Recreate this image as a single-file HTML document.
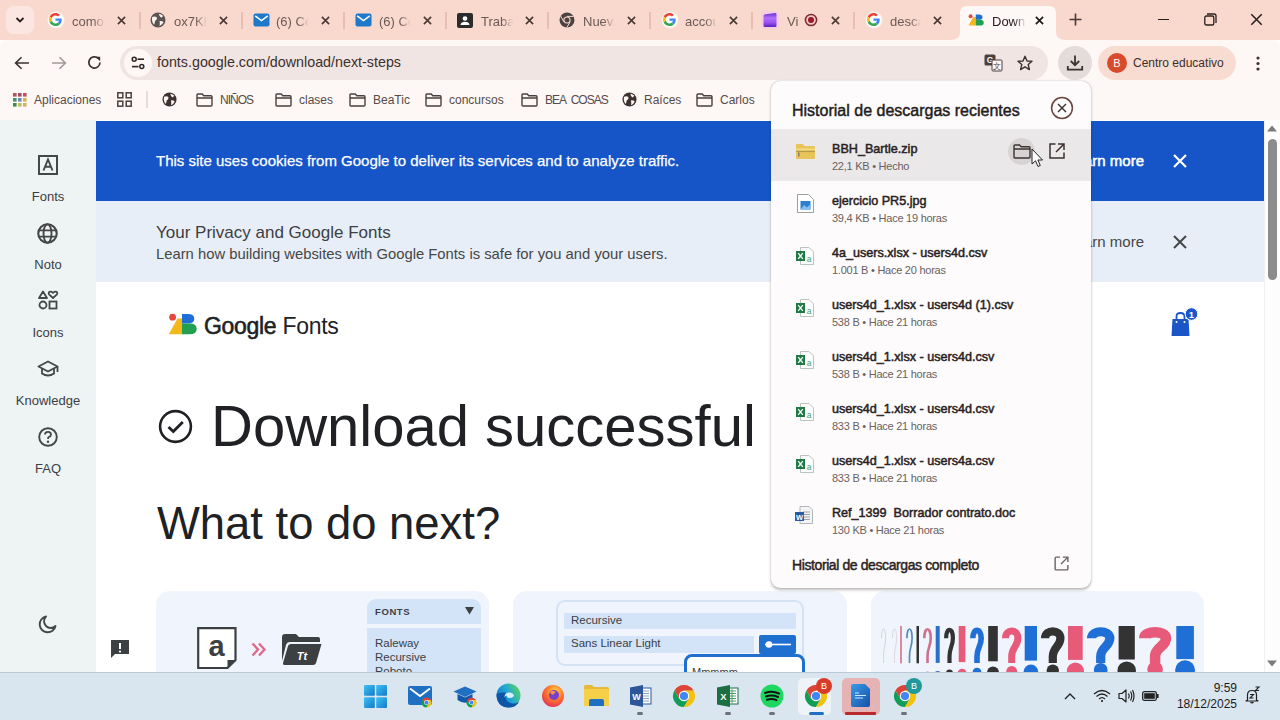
<!DOCTYPE html>
<html><head><meta charset="utf-8"><style>
*{margin:0;padding:0;box-sizing:border-box}
html,body{width:1280px;height:720px;overflow:hidden;font-family:"Liberation Sans",sans-serif;background:#fff}
.a{position:absolute}
svg{position:absolute;overflow:visible}
.tt{position:absolute;font-size:13px;color:#6a5a56;white-space:nowrap;overflow:hidden;-webkit-mask-image:linear-gradient(to right,#000 65%,transparent)}
.bm{position:absolute;font-size:12px;color:#574c4a;white-space:nowrap;top:93px}
.rl{position:absolute;font-size:13px;color:#3c4043;width:96px;text-align:center;left:0}
.fn{position:absolute;font-size:13.5px;font-weight:bold;color:#2a2222;white-space:nowrap;left:61px}
.fs{position:absolute;font-size:11.5px;color:#6b6260;white-space:nowrap;left:61px}
</style></head><body>
<div class="a" style="left:0;top:0;width:1280px;height:40px;background:#f9d8ce"></div>
<div class="a" style="left:6px;top:6px;width:28px;height:28px;border-radius:8px;background:#fbe6e1"></div>
<svg style="left:15px;top:16px" width="10" height="8" viewBox="0 0 10 8"><path d="M1.5 2 L5 5.5 L8.5 2" stroke="#2a1f1d" stroke-width="1.8" fill="none"/></svg>
<div class="a" style="left:46.5px;top:10.5px;width:18px;height:18px;border-radius:9px;background:radial-gradient(circle,#fff 55%,rgba(255,255,255,0) 72%)"></div>
<div class="a" style="left:660.5px;top:10.5px;width:18px;height:18px;border-radius:9px;background:radial-gradient(circle,#fff 55%,rgba(255,255,255,0) 72%)"></div>
<div class="a" style="left:864.5px;top:10.5px;width:18px;height:18px;border-radius:9px;background:radial-gradient(circle,#fff 55%,rgba(255,255,255,0) 72%)"></div>
<svg style="left:49px;top:13px" width="13" height="13" viewBox="0 0 48 48"><path fill="#EA4335" d="M24 9.5c3.54 0 6.71 1.22 9.21 3.6l6.85-6.850C35.9 2.38 30.47 0 24 0 14.62 0 6.51 5.38 2.56 13.22l7.98 6.19C12.43 13.72 17.74 9.5 24 9.5z"/><path fill="#4285F4" d="M46.98 24.55c0-1.57-.15-3.09-.38-4.55H24v9.02h12.94c-.58 2.96-2.26 5.48-4.780 7.18l7.73 6c4.51-4.18 7.09-10.36 7.09-17.65z"/><path fill="#FBBC05" d="M10.53 28.59c-.48-1.45-.76-2.99-.76-4.59s.27-3.14.76-4.59l-7.98-6.19C.92 16.46 0 20.12 0 24c0 3.88.92 7.54 2.56 10.78l7.97-6.19z"/><path fill="#34A853" d="M24 48c6.48 0 11.930-2.13 15.89-5.81l-7.73-6c-2.15 1.45-4.92 2.3-8.16 2.3-6.26 0-11.57-4.22-13.47-9.91l-7.98 6.19C6.51 42.62 14.62 48 24 48z"/></svg>
<div class="tt" style="left:72px;top:13.5px;width:33px">como</div>
<svg style="left:116.5px;top:15.5px" width="9" height="9" viewBox="0 0 10 10"><path d="M1 1 L9 9 M9 1 L1 9" stroke="#4a3a36" stroke-width="1.8"/></svg>
<svg style="left:150px;top:12px" width="16" height="16" viewBox="0 0 16 16"><circle cx="8" cy="8" r="7.5" fill="#5c5452"/><path d="M2.2 5 Q4.5 3.8 6.5 5 Q7.8 6.8 6 8.2 Q4.5 8.8 4.8 10.5 L4 12.8 Q1.2 9.5 2.2 5Z M8.8 1.8 Q11.5 2.2 13.2 4 L11.2 5.8 Q9.5 5 8.8 1.8Z M9.5 9 Q11.8 8.5 13.6 10 Q12.4 12.8 9.6 14 Q10.2 11.2 9.5 9Z" fill="#fdf2ee"/></svg>
<div class="tt" style="left:174px;top:13.5px;width:33px">ox7Kl</div>
<svg style="left:218.5px;top:15.5px" width="9" height="9" viewBox="0 0 10 10"><path d="M1 1 L9 9 M9 1 L1 9" stroke="#4a3a36" stroke-width="1.8"/></svg>
<svg style="left:253px;top:13px" width="17" height="14" viewBox="0 0 17 14"><rect x="0.5" y="0.5" width="16" height="13" rx="2" fill="#1f78c8"/><path d="M2.2 2.8 L8.5 7.6 L14.8 2.8" stroke="#fff" stroke-width="1.5" fill="none"/></svg>
<div class="tt" style="left:276px;top:13.5px;width:33px">(6) Co</div>
<svg style="left:320.5px;top:15.5px" width="9" height="9" viewBox="0 0 10 10"><path d="M1 1 L9 9 M9 1 L1 9" stroke="#4a3a36" stroke-width="1.8"/></svg>
<svg style="left:355px;top:13px" width="17" height="14" viewBox="0 0 17 14"><rect x="0.5" y="0.5" width="16" height="13" rx="2" fill="#1f78c8"/><path d="M2.2 2.8 L8.5 7.6 L14.8 2.8" stroke="#fff" stroke-width="1.5" fill="none"/></svg>
<div class="tt" style="left:379px;top:13.5px;width:32px">(6) Co</div>
<svg style="left:422.5px;top:15.5px" width="9" height="9" viewBox="0 0 10 10"><path d="M1 1 L9 9 M9 1 L1 9" stroke="#4a3a36" stroke-width="1.8"/></svg>
<svg style="left:457px;top:13px" width="16" height="15" viewBox="0 0 16 15"><rect x="0" y="0" width="16" height="15" rx="2" fill="#2b2b2b"/><circle cx="8" cy="5.5" r="2.3" fill="#fff"/><path d="M3.5 12 Q4 8.8 8 8.8 Q12 8.8 12.5 12Z" fill="#fff"/></svg>
<div class="tt" style="left:481px;top:13.5px;width:32px">Trabaj</div>
<svg style="left:524.5px;top:15.5px" width="9" height="9" viewBox="0 0 10 10"><path d="M1 1 L9 9 M9 1 L1 9" stroke="#4a3a36" stroke-width="1.8"/></svg>
<svg style="left:559px;top:12px" width="16" height="16" viewBox="0 0 16 16"><circle cx="8" cy="8" r="7.5" fill="#4a4341"/><circle cx="8" cy="8" r="3.6" fill="#f9d8ce"/><circle cx="8" cy="8" r="2.5" fill="#4a4341"/><path d="M8 4.4 L14.6 4.4" stroke="#f9d8ce" stroke-width="1"/><path d="M4.9 9.8 L1.6 4" stroke="#f9d8ce" stroke-width="1"/><path d="M11.1 9.8 L7.8 15.5" stroke="#f9d8ce" stroke-width="1"/></svg>
<div class="tt" style="left:583px;top:13.5px;width:32px">Nueva</div>
<svg style="left:626.5px;top:15.5px" width="9" height="9" viewBox="0 0 10 10"><path d="M1 1 L9 9 M9 1 L1 9" stroke="#4a3a36" stroke-width="1.8"/></svg>
<svg style="left:663px;top:13px" width="13" height="13" viewBox="0 0 48 48"><path fill="#EA4335" d="M24 9.5c3.54 0 6.71 1.22 9.21 3.6l6.85-6.850C35.9 2.38 30.47 0 24 0 14.62 0 6.51 5.38 2.56 13.22l7.98 6.19C12.43 13.72 17.74 9.5 24 9.5z"/><path fill="#4285F4" d="M46.98 24.55c0-1.57-.15-3.09-.38-4.55H24v9.02h12.94c-.58 2.96-2.26 5.48-4.780 7.18l7.73 6c4.51-4.18 7.09-10.36 7.09-17.65z"/><path fill="#FBBC05" d="M10.53 28.59c-.48-1.45-.76-2.99-.76-4.59s.27-3.14.76-4.59l-7.98-6.19C.92 16.46 0 20.12 0 24c0 3.88.92 7.54 2.56 10.78l7.97-6.19z"/><path fill="#34A853" d="M24 48c6.48 0 11.930-2.13 15.89-5.81l-7.73-6c-2.15 1.45-4.92 2.3-8.16 2.3-6.26 0-11.57-4.22-13.47-9.91l-7.98 6.19C6.51 42.62 14.62 48 24 48z"/></svg>
<div class="tt" style="left:685px;top:13.5px;width:32px">accou</div>
<svg style="left:728.5px;top:15.5px" width="9" height="9" viewBox="0 0 10 10"><path d="M1 1 L9 9 M9 1 L1 9" stroke="#4a3a36" stroke-width="1.8"/></svg>
<svg style="left:762px;top:12px" width="16" height="16" viewBox="0 0 16 16"><defs><linearGradient id="vg" x1="0" y1="0" x2="0" y2="1"><stop offset="0" stop-color="#6a2cc8"/><stop offset=".35" stop-color="#b070f8"/><stop offset=".7" stop-color="#9a50f0"/><stop offset="1" stop-color="#5a20b8"/></linearGradient></defs><rect x="-1" y="-1" width="18" height="18" rx="4" fill="#f3c8f0" opacity=".6"/><path d="M1.5 4 Q1.5 2.5 3.5 2.2 L13.5 1 Q14.5 1 14.5 2.5 L14.5 13.5 Q14.5 15 13 15 L3 15 Q1.5 15 1.5 13.5Z" fill="url(#vg)"/></svg>
<div class="tt" style="left:787px;top:13.5px;width:18px">Vi</div>
<svg style="left:830.5px;top:15.5px" width="9" height="9" viewBox="0 0 10 10"><path d="M1 1 L9 9 M9 1 L1 9" stroke="#4a3a36" stroke-width="1.8"/></svg>
<svg style="left:867px;top:13px" width="13" height="13" viewBox="0 0 48 48"><path fill="#EA4335" d="M24 9.5c3.54 0 6.71 1.22 9.21 3.6l6.85-6.850C35.9 2.38 30.47 0 24 0 14.62 0 6.51 5.38 2.56 13.22l7.98 6.19C12.43 13.72 17.74 9.5 24 9.5z"/><path fill="#4285F4" d="M46.98 24.55c0-1.57-.15-3.09-.38-4.55H24v9.02h12.94c-.58 2.96-2.26 5.48-4.780 7.18l7.73 6c4.51-4.18 7.09-10.36 7.09-17.65z"/><path fill="#FBBC05" d="M10.53 28.59c-.48-1.45-.76-2.99-.76-4.59s.27-3.14.76-4.59l-7.98-6.19C.92 16.46 0 20.12 0 24c0 3.88.92 7.54 2.56 10.78l7.97-6.19z"/><path fill="#34A853" d="M24 48c6.48 0 11.930-2.13 15.89-5.81l-7.73-6c-2.15 1.45-4.92 2.3-8.16 2.3-6.26 0-11.57-4.22-13.47-9.91l-7.98 6.19C6.51 42.62 14.62 48 24 48z"/></svg>
<div class="tt" style="left:890px;top:13.5px;width:31px">desca</div>
<svg style="left:932.5px;top:15.5px" width="9" height="9" viewBox="0 0 10 10"><path d="M1 1 L9 9 M9 1 L1 9" stroke="#4a3a36" stroke-width="1.8"/></svg>
<div class="a" style="left:139px;top:12px;width:1.5px;height:17px;background:#e9bdb2"></div>
<div class="a" style="left:241px;top:12px;width:1.5px;height:17px;background:#e9bdb2"></div>
<div class="a" style="left:343px;top:12px;width:1.5px;height:17px;background:#e9bdb2"></div>
<div class="a" style="left:445px;top:12px;width:1.5px;height:17px;background:#e9bdb2"></div>
<div class="a" style="left:547px;top:12px;width:1.5px;height:17px;background:#e9bdb2"></div>
<div class="a" style="left:649px;top:12px;width:1.5px;height:17px;background:#e9bdb2"></div>
<div class="a" style="left:751px;top:12px;width:1.5px;height:17px;background:#e9bdb2"></div>
<div class="a" style="left:853px;top:12px;width:1.5px;height:17px;background:#e9bdb2"></div>
<svg style="left:804px;top:13px" width="14" height="14" viewBox="0 0 14 14"><circle cx="7" cy="7" r="5.6" fill="#f7c4c8" stroke="#7e2a30" stroke-width="1.5"/><circle cx="7" cy="7" r="3" fill="#9a1a2a"/></svg>
<svg style="left:950px;top:5px" width="116" height="36" viewBox="0 0 116 36"><path d="M0 35 Q10 35 10 27 L10 8 Q10 1 17 1 L99 1 Q106 1 106 8 L106 27 Q106 35 116 35 L116 36 L0 36Z" fill="#fdf7f5"/></svg>
<svg style="left:968px;top:14px" width="16" height="12" viewBox="0 0 29 22"><circle cx="4.6" cy="4.2" r="3.6" fill="#e5473a"/><path d="M0.8 21.3 L14 21.3 L14 5.5 L9.5 5.5Z" fill="#f4b81c"/><path d="M14 1 H20 Q26.3 1 26.3 5.8 Q26.3 10.6 20 10.6 H14Z" fill="#1f6ed6"/><path d="M14 10.6 H21.5 Q28.7 10.6 28.7 16 Q28.7 21.3 21.5 21.3 H14Z" fill="#22a050"/></svg>
<div class="tt" style="left:992px;top:13.5px;width:34px;color:#2a2220">Down</div>
<svg style="left:1034.5px;top:15.5px" width="9" height="9" viewBox="0 0 10 10"><path d="M1 1 L9 9 M9 1 L1 9" stroke="#1f1a19" stroke-width="1.9"/></svg>
<svg style="left:1069px;top:13px" width="13" height="13" viewBox="0 0 13 13"><path d="M6.5 0.5 V12.5 M0.5 6.5 H12.5" stroke="#4a3a36" stroke-width="1.6"/></svg>
<div class="a" style="left:1158px;top:19px;width:11px;height:1.3px;background:#2a1f1d"></div>
<svg style="left:1204px;top:13px" width="13" height="13" viewBox="0 0 13 13"><rect x="0.8" y="3" width="9" height="9" rx="1.6" fill="none" stroke="#2a1f1d" stroke-width="1.3"/><path d="M3 1 H10 Q12 1 12 3 V10" fill="none" stroke="#2a1f1d" stroke-width="1.3"/></svg>
<svg style="left:1249.5px;top:13px" width="13" height="13" viewBox="0 0 10 10"><path d="M1 1 L9 9 M9 1 L1 9" stroke="#2a1f1d" stroke-width="1.2"/></svg>
<div class="a" style="left:0;top:40px;width:1280px;height:80px;background:#fdf7f5;border-radius:7px 7px 0 0"></div>
<svg style="left:14px;top:56px" width="16" height="14" viewBox="0 0 16 14"><path d="M15 7 H2 M7.5 1.2 L1.6 7 L7.5 12.8" stroke="#3d3230" stroke-width="1.6" fill="none"/></svg>
<svg style="left:51px;top:56px" width="16" height="14" viewBox="0 0 16 14"><path d="M1 7 H14 M8.5 1.2 L14.4 7 L8.5 12.8" stroke="#a39a98" stroke-width="1.6" fill="none"/></svg>
<svg style="left:87px;top:55px" width="15" height="15" viewBox="0 0 15 15"><path d="M13 7.5 A5.6 5.6 0 1 1 11.2 3.3" stroke="#3d3230" stroke-width="1.7" fill="none"/><path d="M8.5 1.8 L13.2 1.8 L13.2 6.3Z" fill="#3d3230"/></svg>
<div class="a" style="left:120px;top:46px;width:928px;height:34px;border-radius:17px;background:#f1e5e3"></div>
<div class="a" style="left:124px;top:49px;width:28px;height:28px;border-radius:14px;background:#fdf7f5"></div>
<svg style="left:131px;top:56px" width="14" height="14" viewBox="0 0 14 14"><circle cx="3.2" cy="3.2" r="2" fill="none" stroke="#2f2624" stroke-width="1.5"/><path d="M6.5 3.2 H13" stroke="#2f2624" stroke-width="1.6"/><circle cx="10.8" cy="10.6" r="2" fill="none" stroke="#2f2624" stroke-width="1.5"/><path d="M1 10.6 H7.5" stroke="#2f2624" stroke-width="1.6"/></svg>
<div class="a" style="left:157px;top:54px;font-size:14.3px;color:#3b2f2c;white-space:nowrap">fonts.google.com/download/next-steps</div>
<svg style="left:984px;top:54px" width="19" height="18" viewBox="0 0 19 18"><rect x="0.5" y="0.5" width="11" height="11" rx="1.5" fill="#4a403e"/><text x="6" y="9.3" font-size="8.5" font-weight="bold" fill="#fdf7f5" text-anchor="middle" font-family="Liberation Sans">G</text><path d="M8 6 H17 Q18 6 18 7 V16 Q18 17 17 17 H9 Q8 17 8 16Z" fill="#fdf7f5" stroke="#4a403e" stroke-width="1"/><text x="13" y="15" font-size="7.5" fill="#4a403e" text-anchor="middle" font-family="Liberation Sans">文</text></svg>
<svg style="left:1017px;top:55px" width="16" height="16" viewBox="0 0 16 16"><path d="M8 1.2 L10 6 L15 6.3 L11.2 9.5 L12.4 14.6 L8 11.8 L3.6 14.6 L4.8 9.5 L1 6.3 L6 6 Z" fill="none" stroke="#3d3230" stroke-width="1.4" stroke-linejoin="round"/></svg>
<div class="a" style="left:1058px;top:46px;width:34px;height:34px;border-radius:17px;background:#e3dcda"></div>
<svg style="left:1066px;top:54px" width="18" height="18" viewBox="0 0 18 18"><path d="M9 1.5 V11 M4.8 7 L9 11.2 L13.2 7" stroke="#3d3230" stroke-width="1.8" fill="none"/><path d="M1.8 12 V15.6 H16.2 V12" stroke="#3d3230" stroke-width="1.8" fill="none"/></svg>
<div class="a" style="left:1098px;top:46px;width:138px;height:34px;border-radius:17px;background:#f8dcd2"></div>
<div class="a" style="left:1107px;top:53px;width:20px;height:20px;border-radius:10px;background:#d84a2c;color:#fff;font-size:11px;text-align:center;line-height:20px">B</div>
<div class="a" style="left:1133px;top:56px;font-size:12px;color:#3b2f2c;white-space:nowrap">Centro educativo</div>
<svg style="left:1256px;top:56px" width="4" height="15" viewBox="0 0 4 15"><circle cx="2" cy="2" r="1.6" fill="#3d3230"/><circle cx="2" cy="7.5" r="1.6" fill="#3d3230"/><circle cx="2" cy="13" r="1.6" fill="#3d3230"/></svg>
<svg style="left:13px;top:93px" width="15" height="15" viewBox="0 0 15 15"><rect x="0" y="0" width="3.6" height="3.6" fill="#b7505b"/><rect x="5" y="0" width="3.6" height="3.6" fill="#9c4f6b"/><rect x="10" y="0" width="3.6" height="3.6" fill="#c0505a"/><rect x="0" y="5" width="3.6" height="3.6" fill="#4f8f5e"/><rect x="5" y="5" width="3.6" height="3.6" fill="#6b86b8"/><rect x="10" y="5" width="3.6" height="3.6" fill="#d7b24a"/><rect x="0" y="10" width="3.6" height="3.6" fill="#3f8a53"/><rect x="5" y="10" width="3.6" height="3.6" fill="#c7b860"/><rect x="10" y="10" width="3.6" height="3.6" fill="#c9b85a"/></svg>
<div class="bm" style="left:34px">Aplicaciones</div>
<svg style="left:117px;top:92px" width="15" height="15" viewBox="0 0 15 15"><rect x="0.8" y="0.8" width="5" height="5" fill="none" stroke="#4a403e" stroke-width="1.5"/><rect x="9.2" y="0.8" width="5" height="5" fill="none" stroke="#4a403e" stroke-width="1.5"/><rect x="0.8" y="9.2" width="5" height="5" fill="none" stroke="#4a403e" stroke-width="1.5"/><rect x="9.2" y="9.2" width="5" height="5" fill="none" stroke="#4a403e" stroke-width="1.5"/></svg>
<div class="a" style="left:146px;top:91px;width:1.5px;height:17px;background:#e6dcda"></div>
<svg style="left:162px;top:92px" width="15" height="15" viewBox="0 0 16 16"><circle cx="8" cy="8" r="7.5" fill="#3d3230"/><path d="M2.2 5 Q4.5 3.8 6.5 5 Q7.8 6.8 6 8.2 Q4.5 8.8 4.8 10.5 L4 12.8 Q1.2 9.5 2.2 5Z M8.8 1.8 Q11.5 2.2 13.2 4 L11.2 5.8 Q9.5 5 8.8 1.8Z M9.5 9 Q11.8 8.5 13.6 10 Q12.4 12.8 9.6 14 Q10.2 11.2 9.5 9Z" fill="#fdf7f5"/></svg>
<svg style="left:196px;top:93px" width="17" height="14" viewBox="0 0 17 14"><path d="M1 2 Q1 1 2 1 L6.2 1 L7.8 2.8 L15 2.8 Q16 2.8 16 3.8 L16 12 Q16 13 15 13 L2 13 Q1 13 1 12Z M1 5 H16" fill="none" stroke="#4a403e" stroke-width="1.4"/></svg>
<div class="bm" style="left:220px;letter-spacing:-1px;word-spacing:3px">NIÑOS</div>
<svg style="left:275px;top:93px" width="17" height="14" viewBox="0 0 17 14"><path d="M1 2 Q1 1 2 1 L6.2 1 L7.8 2.8 L15 2.8 Q16 2.8 16 3.8 L16 12 Q16 13 15 13 L2 13 Q1 13 1 12Z M1 5 H16" fill="none" stroke="#4a403e" stroke-width="1.4"/></svg>
<div class="bm" style="left:299px">clases</div>
<svg style="left:349px;top:93px" width="17" height="14" viewBox="0 0 17 14"><path d="M1 2 Q1 1 2 1 L6.2 1 L7.8 2.8 L15 2.8 Q16 2.8 16 3.8 L16 12 Q16 13 15 13 L2 13 Q1 13 1 12Z M1 5 H16" fill="none" stroke="#4a403e" stroke-width="1.4"/></svg>
<div class="bm" style="left:373px">BeaTic</div>
<svg style="left:425px;top:93px" width="17" height="14" viewBox="0 0 17 14"><path d="M1 2 Q1 1 2 1 L6.2 1 L7.8 2.8 L15 2.8 Q16 2.8 16 3.8 L16 12 Q16 13 15 13 L2 13 Q1 13 1 12Z M1 5 H16" fill="none" stroke="#4a403e" stroke-width="1.4"/></svg>
<div class="bm" style="left:449px">concursos</div>
<svg style="left:521px;top:93px" width="17" height="14" viewBox="0 0 17 14"><path d="M1 2 Q1 1 2 1 L6.2 1 L7.8 2.8 L15 2.8 Q16 2.8 16 3.8 L16 12 Q16 13 15 13 L2 13 Q1 13 1 12Z M1 5 H16" fill="none" stroke="#4a403e" stroke-width="1.4"/></svg>
<div class="bm" style="left:545px;letter-spacing:-1px;word-spacing:3px">BEA COSAS</div>
<svg style="left:696px;top:93px" width="17" height="14" viewBox="0 0 17 14"><path d="M1 2 Q1 1 2 1 L6.2 1 L7.8 2.8 L15 2.8 Q16 2.8 16 3.8 L16 12 Q16 13 15 13 L2 13 Q1 13 1 12Z M1 5 H16" fill="none" stroke="#4a403e" stroke-width="1.4"/></svg>
<div class="bm" style="left:720px">Carlos</div>
<svg style="left:622px;top:92px" width="15" height="15" viewBox="0 0 16 16"><circle cx="8" cy="8" r="7.5" fill="#3d3230"/><path d="M2.2 5 Q4.5 3.8 6.5 5 Q7.8 6.8 6 8.2 Q4.5 8.8 4.8 10.5 L4 12.8 Q1.2 9.5 2.2 5Z M8.8 1.8 Q11.5 2.2 13.2 4 L11.2 5.8 Q9.5 5 8.8 1.8Z M9.5 9 Q11.8 8.5 13.6 10 Q12.4 12.8 9.6 14 Q10.2 11.2 9.5 9Z" fill="#fdf7f5"/></svg>
<div class="bm" style="left:644px">Raíces</div>
<div class="a" style="left:0;top:120px;width:1280px;height:552px;background:#fff"></div>
<div class="a" style="left:0;top:120px;width:96px;height:552px;background:#eef3f4"></div>
<svg style="left:38px;top:155px" width="20" height="20" viewBox="0 0 20 20"><rect x="1" y="1" width="18" height="18" fill="none" stroke="#444746" stroke-width="2"/><path d="M5.5 15.5 L10 4.5 L14.5 15.5 M7 11.8 H13" stroke="#444746" stroke-width="1.9" fill="none"/></svg>
<div class="rl" style="top:189px">Fonts</div>
<svg style="left:37px;top:223px" width="21" height="21" viewBox="0 0 20 20"><circle cx="10" cy="10" r="8.8" fill="none" stroke="#444746" stroke-width="2"/><ellipse cx="10" cy="10" rx="3.8" ry="8.8" fill="none" stroke="#444746" stroke-width="1.8"/><path d="M1.5 7 H18.5 M1.5 13 H18.5" stroke="#444746" stroke-width="1.8"/></svg>
<div class="rl" style="top:257px">Noto</div>
<svg style="left:38px;top:290px" width="20" height="20" viewBox="0 0 20 20"><path d="M5 1.5 L9 8 L1 8Z" fill="none" stroke="#444746" stroke-width="1.8" stroke-linejoin="round"/><path d="M15 8 L11.3 4.6 Q10 3 11.5 1.8 Q13 1 15 2.8 Q17 1 18.5 1.8 Q20 3 18.7 4.6Z" fill="none" stroke="#444746" stroke-width="1.8" stroke-linejoin="round"/><circle cx="5" cy="15" r="3.5" fill="none" stroke="#444746" stroke-width="1.8"/><rect x="11.5" y="11.5" width="7" height="7" fill="none" stroke="#444746" stroke-width="1.8"/></svg>
<div class="rl" style="top:325px">Icons</div>
<svg style="left:37px;top:360px" width="22" height="18" viewBox="0 0 22 18"><path d="M11 1.5 L20.5 6.5 L11 11.5 L1.5 6.5Z" fill="none" stroke="#444746" stroke-width="1.8" stroke-linejoin="round"/><path d="M5 8.5 V13.5 Q11 17.5 17 13.5 V8.5" fill="none" stroke="#444746" stroke-width="1.8"/><path d="M20.5 6.5 V12" stroke="#444746" stroke-width="1.8"/></svg>
<div class="rl" style="top:393px">Knowledge</div>
<svg style="left:38px;top:427px" width="20" height="20" viewBox="0 0 20 20"><circle cx="10" cy="10" r="8.8" fill="none" stroke="#444746" stroke-width="1.9"/><path d="M7 7.5 Q7 4.8 10 4.8 Q13 4.8 13 7.5 Q13 9.2 10.8 10 Q10 10.5 10 12" fill="none" stroke="#444746" stroke-width="1.8"/><circle cx="10" cy="14.8" r="1.2" fill="#444746"/></svg>
<div class="rl" style="top:461px">FAQ</div>
<svg style="left:38px;top:615px" width="19" height="19" viewBox="0 0 19 19"><path d="M8 1.5 A8 8 0 1 0 17.5 11 A6.5 6.5 0 0 1 8 1.5Z" fill="none" stroke="#444746" stroke-width="1.9" stroke-linejoin="round"/></svg>
<svg style="left:110px;top:639px" width="20" height="20" viewBox="0 0 20 20"><path d="M1 1 H19 V15 H5 L1 19Z" fill="#3c4043"/><path d="M10 4 V10" stroke="#fff" stroke-width="2"/><circle cx="10" cy="12.6" r="1.1" fill="#fff"/></svg>
<div class="a" style="left:96px;top:121px;width:1168px;height:80px;background:#1555c7"></div>
<div class="a" style="left:96px;top:201px;width:1168px;height:81px;background:#e8eef7"></div>
<div class="a" style="left:156px;top:152px;font-size:15px;color:#fff;-webkit-text-stroke:0.25px #fff;white-space:nowrap">This site uses cookies from Google to deliver its services and to analyze traffic.</div>
<div class="a" style="left:944px;width:200px;text-align:right;top:152px;font-size:15px;-webkit-text-stroke:0.5px #fff;color:#fff;white-space:nowrap">Learn more</div>
<svg style="left:1173px;top:154px" width="14" height="14" viewBox="0 0 14 14"><path d="M1 1 L13 13 M13 1 L1 13" stroke="#fff" stroke-width="2.2"/></svg>
<div class="a" style="left:156px;top:223px;font-size:17px;color:#3c4043;white-space:nowrap">Your Privacy and Google Fonts</div>
<div class="a" style="left:156px;top:246px;font-size:14.8px;color:#444746;white-space:nowrap">Learn how building websites with Google Fonts is safe for you and your users.</div>
<div class="a" style="left:944px;width:200px;text-align:right;top:233px;font-size:15px;color:#444746;white-space:nowrap">Learn more</div>
<svg style="left:1173px;top:235px" width="14" height="14" viewBox="0 0 14 14"><path d="M1 1 L13 13 M13 1 L1 13" stroke="#444746" stroke-width="2"/></svg>
<svg style="left:168px;top:313px" width="29" height="22" viewBox="0 0 29 22"><circle cx="4.6" cy="4.2" r="3.4" fill="#e5473a"/><path d="M0.8 21.3 L14 21.3 L14 5.5 L9.5 5.5Z" fill="#f4b81c"/><path d="M14 1 H20 Q26.3 1 26.3 5.8 Q26.3 10.6 20 10.6 H14Z" fill="#1f6ed6"/><path d="M14 10.6 H21.5 Q28.7 10.6 28.7 16 Q28.7 21.3 21.5 21.3 H14Z" fill="#22a050"/></svg>
<div class="a" style="left:204px;top:312.5px;font-size:23px;color:#202124;white-space:nowrap;letter-spacing:-0.3px"><span style="-webkit-text-stroke:0.55px #202124">Google</span> Fonts</div>
<svg style="left:1171px;top:308px" width="28" height="30" viewBox="0 0 28 30"><path d="M1.5 11 H17.5 L18.5 28 H0.5Z" fill="#1a56c8"/><path d="M5.5 12 V8.5 Q5.5 5 9.5 5 Q13.5 5 13.5 8.5 V12" fill="none" stroke="#1a56c8" stroke-width="1.8"/><circle cx="5.5" cy="14" r="1" fill="#fff"/><circle cx="13.5" cy="14" r="1" fill="#fff"/><circle cx="20.5" cy="6" r="6.3" fill="#1a56c8" stroke="#fff" stroke-width="1"/><text x="20.5" y="9.6" font-size="9.5" font-weight="bold" fill="#fff" text-anchor="middle" font-family="Liberation Sans">1</text></svg>
<svg style="left:158px;top:409px" width="36" height="36" viewBox="0 0 36 36"><circle cx="17.5" cy="17.5" r="15.4" fill="none" stroke="#202124" stroke-width="2.6"/><path d="M10.5 18 L15.3 22.6 L24.8 13" fill="none" stroke="#202124" stroke-width="2.8"/></svg>
<div class="a" style="left:211px;top:392px;font-size:58px;color:#202124;white-space:nowrap">Download successful</div>
<div class="a" style="left:157px;top:498px;font-size:45.4px;color:#202124;white-space:nowrap">What to do next?</div>
<div class="a" style="left:156px;top:591px;width:333px;height:120px;border-radius:14px;background:#f0f5fd"></div>
<div class="a" style="left:513px;top:591px;width:334px;height:120px;border-radius:14px;background:#f0f5fd"></div>
<div class="a" style="left:871px;top:591px;width:333px;height:120px;border-radius:14px;background:#f0f5fd"></div>
<svg style="left:197px;top:627px" width="40" height="42" viewBox="0 0 40 42"><path d="M1.2 1.2 H38.5 V33 L30.5 41 H1.2Z" fill="#fff" stroke="#3c4043" stroke-width="2.2"/><path d="M38.5 33 L30.5 33 L30.5 41Z" fill="#3c4043"/><text x="19.5" y="29" font-size="29" font-weight="bold" fill="#3c4043" text-anchor="middle" font-family="Liberation Sans">a</text></svg>
<svg style="left:251px;top:642px" width="16" height="15" viewBox="0 0 16 15"><path d="M1.5 1.5 L7 7.5 L1.5 13.5 M8 1.5 L13.5 7.5 L8 13.5" fill="none" stroke="#e06a8a" stroke-width="2.4"/></svg>
<svg style="left:282px;top:634px" width="40" height="31" viewBox="0 0 40 31"><path d="M0 3 Q0 0 3 0 L14 0 L17 3 L36 3 Q38 3 38 5 L38 8 H8 Q5 8 4 11 L0 27Z" fill="#3c4043"/><path d="M9 10 H39.5 L34 29 Q33.5 31 31 31 H2.5 Q0.5 31 1 29 L6 12 Q6.5 10 9 10Z" fill="#3c4043"/><text x="20" y="26" font-size="11" font-weight="bold" font-style="italic" fill="#fff" text-anchor="middle" font-family="Liberation Sans">Tt</text></svg>
<div class="a" style="left:367px;top:599px;width:114px;height:25px;border-radius:9px 9px 0 0;background:#d3e3f8"></div>
<div class="a" style="left:375px;top:606px;font-size:9.5px;font-weight:bold;letter-spacing:0.6px;color:#3c4043">FONTS</div>
<svg style="left:465px;top:607px" width="9" height="8" viewBox="0 0 9 8"><path d="M0 0 H9 L4.5 7.5Z" fill="#3c4043"/></svg>
<div class="a" style="left:367px;top:628px;width:114px;height:60px;background:#d3e3f8"></div>
<div class="a" style="left:375px;top:636px;font-size:11.5px;line-height:14px;color:#3c4043">Raleway<br>Recursive<br>Roboto</div>
<div class="a" style="left:556px;top:600px;width:248px;height:66px;border-radius:9px;border:2px solid #d3e2f5"></div>
<div class="a" style="left:564px;top:613px;width:232px;height:16px;background:#d3e3f8"></div>
<div class="a" style="left:571px;top:614px;font-size:11.5px;color:#3c4043">Recursive</div>
<div class="a" style="left:564px;top:636px;width:190px;height:17px;background:#d3e3f8"></div>
<div class="a" style="left:571px;top:637px;font-size:11.5px;color:#3c4043">Sans Linear Light</div>
<div class="a" style="left:759px;top:635px;width:37px;height:19px;background:#1f6fd0;border-radius:2px"></div>
<svg style="left:763px;top:640px" width="30" height="9" viewBox="0 0 30 9"><circle cx="6" cy="4.5" r="3.3" fill="#fff"/><path d="M2 4.5 H28" stroke="#fff" stroke-width="1.6"/></svg>
<div class="a" style="left:684px;top:654px;width:121px;height:40px;border-radius:8px;border:3px solid #1f6fd0;background:#fff"></div>
<div class="a" style="left:692px;top:666px;width:50px;height:6px;overflow:hidden"><div style="font-size:11px;color:#3c4043">Mmmmm</div></div>
<svg style="left:870px;top:600px" width="340" height="80" viewBox="0 0 340 80"><path d="M11.5 38.2 C11.5 25.5 15.5 25.5 15.5 38.2 C15.5 46.4 13.5 47.5 13.5 56.3 L13.5 63.0" fill="none" stroke="#d8d4dc" stroke-width="1.0"/><circle cx="13.5" cy="74.9" r="1.2" fill="#d8d4dc"/><path d="M22.5 38.2 C22.5 25.5 26.5 25.5 26.5 38.2 C26.5 46.4 24.5 47.5 24.5 56.3 L24.5 63.0" fill="none" stroke="#ddd6de" stroke-width="1.0"/><circle cx="24.5" cy="74.9" r="1.2" fill="#ddd6de"/><rect x="30.0" y="26" width="2.0" height="37.4" fill="#d98ca0"/><circle cx="31.0" cy="74.6" r="2.2" fill="#d98ca0"/><path d="M36.9 38.2 C36.9 25.9 42.1 25.9 42.1 38.2 C42.1 46.4 39.5 47.5 39.5 56.3 L39.5 63.0" fill="none" stroke="#5a8ab8" stroke-width="1.7"/><circle cx="39.5" cy="74.5" r="1.7" fill="#5a8ab8"/><rect x="46.5" y="26" width="2.5" height="37.3" fill="#333"/><circle cx="47.8" cy="74.5" r="2.5" fill="#333"/><path d="M54.3 38.2 C54.3 26.3 60.7 26.3 60.7 38.2 C60.7 46.4 57.5 47.5 57.5 56.3 L57.5 63.0" fill="none" stroke="#d07090" stroke-width="2.6"/><circle cx="57.5" cy="73.9" r="2.3" fill="#d07090"/><rect x="65.7" y="26" width="4.0" height="36.9" fill="#2a70c8"/><circle cx="67.7" cy="74.1" r="3.2" fill="#2a70c8"/><path d="M76.1 38.2 C76.1 27.1 82.9 27.1 82.9 38.2 C82.9 46.4 79.5 47.5 79.5 56.3 L79.5 63.0" fill="none" stroke="#333" stroke-width="4.2"/><circle cx="79.5" cy="73.0" r="3.4" fill="#333"/><rect x="88.7" y="26" width="6.7" height="36.1" fill="#e85a7a"/><circle cx="92.1" cy="73.3" r="4.5" fill="#e85a7a"/><path d="M102.8 38.2 C102.8 27.8 111.2 27.8 111.2 38.2 C111.2 46.4 107.0 47.5 107.0 56.3 L107.0 63.0" fill="none" stroke="#1f6fd6" stroke-width="5.6"/><circle cx="107.0" cy="72.1" r="4.4" fill="#1f6fd6"/><rect x="118.2" y="26" width="9.6" height="35.3" fill="#333"/><circle cx="123.0" cy="72.5" r="6.0" fill="#333"/><path d="M135.5 38.2 C135.5 28.5 147.9 28.5 147.9 38.2 C147.9 46.4 141.7 47.5 141.7 56.3 L141.7 63.0" fill="none" stroke="#e85a7a" stroke-width="7"/><circle cx="141.7" cy="71.3" r="5.4" fill="#e85a7a"/><rect x="154.7" y="26" width="12.3" height="34.6" fill="#1f6fd6"/><circle cx="160.9" cy="71.8" r="7.3" fill="#1f6fd6"/><path d="M175.1 38.2 C175.1 29.1 190.4 29.1 190.4 38.2 C190.4 46.4 182.8 47.5 182.8 56.3 L182.8 63.0" fill="none" stroke="#333" stroke-width="8.2"/><circle cx="182.8" cy="70.6" r="6.2" fill="#333"/><rect x="198.0" y="26" width="14.7" height="33.9" fill="#e85a7a"/><circle cx="205.4" cy="71.1" r="8.6" fill="#e85a7a"/><path d="M221.6 38.2 C221.6 29.6 239.8 29.6 239.8 38.2 C239.8 46.4 230.7 47.5 230.7 56.3 L230.7 63.0" fill="none" stroke="#1f6fd6" stroke-width="9.2"/><circle cx="230.7" cy="70.0" r="6.9" fill="#1f6fd6"/><rect x="248.6" y="26" width="16.2" height="33.5" fill="#333"/><circle cx="256.7" cy="70.7" r="9.3" fill="#333"/><path d="M274.2 38.2 C274.2 30.2 296.0 30.2 296.0 38.2 C296.0 46.4 285.1 47.5 285.1 56.3 L285.1 63.0" fill="none" stroke="#e85a7a" stroke-width="10.5"/><circle cx="285.1" cy="69.2" r="7.8" fill="#e85a7a"/><rect x="306.3" y="26" width="17.6" height="33.1" fill="#1f6fd6"/><circle cx="315.1" cy="70.3" r="10.0" fill="#1f6fd6"/></svg>
<div class="a" style="left:1264px;top:120px;width:16px;height:552px;background:#fdfdfd;border-left:1px solid #f0f0f0"></div>
<svg style="left:1267px;top:125px" width="10" height="7" viewBox="0 0 10 7"><path d="M0 6.5 L5 0.5 L10 6.5Z" fill="#7a7a7a"/></svg>
<div class="a" style="left:1268px;top:139px;width:9px;height:141px;border-radius:5px;background:#8c8c8c"></div>
<svg style="left:1267px;top:660px" width="10" height="7" viewBox="0 0 10 7"><path d="M0 0.5 L5 6.5 L10 0.5Z" fill="#7a7a7a"/></svg>
<div class="a" style="left:0;top:672px;width:1280px;height:48px;background:#d9e6f0;border-top:1px solid #b9c9d6"></div>
<svg style="left:364px;top:685px" width="23" height="23" viewBox="0 0 23 23"><defs><linearGradient id="wg" x1="0" y1="0" x2="1" y2="1"><stop offset="0" stop-color="#3cc4f4"/><stop offset="1" stop-color="#1478c8"/></linearGradient></defs><rect x="0" y="0" width="10.8" height="10.8" rx="1" fill="url(#wg)"/><rect x="12.2" y="0" width="10.8" height="10.8" rx="1" fill="url(#wg)"/><rect x="0" y="12.2" width="10.8" height="10.8" rx="1" fill="url(#wg)"/><rect x="12.2" y="12.2" width="10.8" height="10.8" rx="1" fill="url(#wg)"/></svg>
<svg style="left:408px;top:686px" width="24" height="20" viewBox="0 0 24 20"><rect x="0" y="0" width="24" height="19" rx="2" fill="#1f6fc2"/><path d="M2 2.5 L12 10 L22 2.5" stroke="#fff" stroke-width="1.8" fill="none"/></svg>
<svg style="left:421px;top:697px" width="11" height="11" viewBox="0 0 24 24"><path d="M12 1 A11 11 0 0 1 21.53 6.5 L12 6.5Z" fill="#db4437"/><path d="M12 1 A11 11 0 0 0 2.47 6.5 L7.24 14.75 L12 6.5 H21.53Z" fill="#db4437"/><path d="M2.47 6.5 A11 11 0 0 0 12 23 L16.76 14.75 L7.24 14.75Z" fill="#0f9d58"/><path d="M12 23 A11 11 0 0 0 21.53 6.5 L12 6.5 L16.76 14.75Z" fill="#f4c20d"/><circle cx="12" cy="12" r="5.2" fill="#fff"/><circle cx="12" cy="12" r="4.1" fill="#4285f4"/></svg>
<svg style="left:453px;top:686px" width="24" height="20" viewBox="0 0 24 20"><path d="M12 0.5 L23.5 5.5 L12 11 L0.5 5.5Z" fill="#1f6fc2"/><path d="M4.5 8 V14 Q12 19.5 19.5 14 V8 L12 11.5Z" fill="#1558a8"/></svg>
<svg style="left:466px;top:697px" width="11" height="11" viewBox="0 0 24 24"><path d="M12 1 A11 11 0 0 1 21.53 6.5 L12 6.5Z" fill="#db4437"/><path d="M12 1 A11 11 0 0 0 2.47 6.5 L7.24 14.75 L12 6.5 H21.53Z" fill="#db4437"/><path d="M2.47 6.5 A11 11 0 0 0 12 23 L16.76 14.75 L7.24 14.75Z" fill="#0f9d58"/><path d="M12 23 A11 11 0 0 0 21.53 6.5 L12 6.5 L16.76 14.75Z" fill="#f4c20d"/><circle cx="12" cy="12" r="5.2" fill="#fff"/><circle cx="12" cy="12" r="4.1" fill="#4285f4"/></svg>
<svg style="left:496px;top:683px" width="25" height="25" viewBox="0 0 25 25"><defs><linearGradient id="eg" x1="0" y1=".7" x2="1" y2=".2"><stop offset="0" stop-color="#1570c0"/><stop offset=".5" stop-color="#22a6d8"/><stop offset="1" stop-color="#5ad65a"/></linearGradient></defs><circle cx="12.5" cy="12.5" r="12" fill="url(#eg)"/><path d="M0.6 11 Q0.5 24 12.5 24.5 Q20 24.5 23 19 Q19 21.5 14.5 20 Q9.5 18 9.5 14 Q9.5 11 12 10 Q5 8.5 0.6 11Z" fill="#0d56a6"/><path d="M8.5 14.5 Q8.5 9.5 13 9.5 Q17.5 9.5 18 13 Q16 15.5 13 15 Q10.5 14.6 11 12.5 Q9 13 8.5 14.5Z" fill="#d8f0fa"/></svg>
<svg style="left:541px;top:683px" width="24" height="25" viewBox="0 0 24 25"><defs><radialGradient id="fg" cx=".6" cy=".3" r=".8"><stop offset="0" stop-color="#ffd54a"/><stop offset=".45" stop-color="#ff7a2a"/><stop offset="1" stop-color="#e0245e"/></radialGradient></defs><circle cx="12" cy="13" r="11" fill="url(#fg)"/><circle cx="13" cy="12" r="5" fill="#7a3fc8"/><path d="M9 9 Q12 7 15 9 Q13 10 12 12 Q10 11 9 9Z" fill="#ff9640"/></svg>
<svg style="left:584px;top:685px" width="25" height="21" viewBox="0 0 25 21"><path d="M0 1.5 Q0 0 1.5 0 L8 0 L10 2 L23.5 2 Q25 2 25 3.5 V19.5 Q25 21 23.5 21 H1.5 Q0 21 0 19.5Z" fill="#e7b93a"/><rect x="0" y="4" width="25" height="17" rx="1.2" fill="#f7d04a"/><path d="M5 21 V16 Q5 14 7 14 H18 Q20 14 20 16 V21Z" fill="#1f6fc2"/></svg>
<svg style="left:630px;top:685px" width="22" height="22" viewBox="0 0 22 22"><rect x="9" y="3" width="12" height="16" fill="#fff" stroke="#2b579a" stroke-width="1"/><path d="M12 6 H19 M12 8.5 H19 M12 11 H19 M12 13.5 H19 M12 16 H19" stroke="#8aa0c0" stroke-width="1"/><path d="M0 2.5 L13 0 V22 L0 19.5Z" fill="#2b579a"/><text x="6.5" y="14.5" font-size="9" font-weight="bold" fill="#fff" text-anchor="middle" font-family="Liberation Sans">W</text></svg>
<svg style="left:672px;top:684px" width="24" height="24" viewBox="0 0 24 24"><path d="M12 1 A11 11 0 0 1 21.53 6.5 L12 6.5Z" fill="#db4437"/><path d="M12 1 A11 11 0 0 0 2.47 6.5 L7.24 14.75 L12 6.5 H21.53Z" fill="#db4437"/><path d="M2.47 6.5 A11 11 0 0 0 12 23 L16.76 14.75 L7.24 14.75Z" fill="#0f9d58"/><path d="M12 23 A11 11 0 0 0 21.53 6.5 L12 6.5 L16.76 14.75Z" fill="#f4c20d"/><circle cx="12" cy="12" r="5.2" fill="#fff"/><circle cx="12" cy="12" r="4.1" fill="#4285f4"/></svg>
<svg style="left:717px;top:685px" width="22" height="22" viewBox="0 0 22 22"><rect x="9" y="3" width="12" height="16" fill="#fff" stroke="#1d6f42" stroke-width="1"/><path d="M12 6 H19 M12 8.5 H19 M12 11 H19 M12 13.5 H19 M12 16 H19 M15 4 V18" stroke="#4c9a6a" stroke-width="1"/><path d="M0 2.5 L13 0 V22 L0 19.5Z" fill="#1d6f42"/><text x="6.5" y="14.5" font-size="9.5" font-weight="bold" fill="#fff" text-anchor="middle" font-family="Liberation Sans">X</text></svg>
<svg style="left:760px;top:684px" width="24" height="24" viewBox="0 0 24 24"><circle cx="12" cy="12" r="11.5" fill="#1ed760"/><path d="M5 9 Q12 6.5 19 9.5 M6 12.5 Q12 10.5 18 13 M7 15.8 Q12 14.2 16.5 16.2" stroke="#121212" stroke-width="2" fill="none" stroke-linecap="round"/></svg>
<div class="a" style="left:798px;top:678px;width:33px;height:37px;border-radius:5px;background:#eef3f8"></div>
<svg style="left:804px;top:684px" width="24" height="24" viewBox="0 0 24 24"><path d="M12 1 A11 11 0 0 1 21.53 6.5 L12 6.5Z" fill="#db4437"/><path d="M12 1 A11 11 0 0 0 2.47 6.5 L7.24 14.75 L12 6.5 H21.53Z" fill="#db4437"/><path d="M2.47 6.5 A11 11 0 0 0 12 23 L16.76 14.75 L7.24 14.75Z" fill="#0f9d58"/><path d="M12 23 A11 11 0 0 0 21.53 6.5 L12 6.5 L16.76 14.75Z" fill="#f4c20d"/><circle cx="12" cy="12" r="5.2" fill="#fff"/><circle cx="12" cy="12" r="4.1" fill="#4285f4"/></svg>
<div class="a" style="left:816px;top:678px;width:16px;height:16px;border-radius:8px;background:#d83b2b;color:#fff;font-size:9px;line-height:16px;text-align:center">B</div>
<div class="a" style="left:809px;top:712px;width:15px;height:3px;border-radius:2px;background:#1f6fc2"></div>
<div class="a" style="left:842px;top:678px;width:38px;height:37px;border-radius:5px;background:#e6b3b5"></div>
<svg style="left:851px;top:684px" width="19" height="23" viewBox="0 0 19 23"><defs><linearGradient id="lg" x1="0" y1="0" x2="1" y2="1"><stop offset="0" stop-color="#3a9be8"/><stop offset="1" stop-color="#1550a8"/></linearGradient></defs><path d="M0 2 Q0 0 2 0 H14 L19 5 V21 Q19 23 17 23 H2 Q0 23 0 21Z" fill="url(#lg)"/><path d="M4 9 H8 M4 11.5 H15 M4 14 H12" stroke="#cfe6fb" stroke-width="1.2"/></svg>
<div class="a" style="left:845px;top:712px;width:31px;height:3px;border-radius:1px;background:#b82a30"></div>
<svg style="left:893px;top:684px" width="24" height="24" viewBox="0 0 24 24"><path d="M12 1 A11 11 0 0 1 21.53 6.5 L12 6.5Z" fill="#db4437"/><path d="M12 1 A11 11 0 0 0 2.47 6.5 L7.24 14.75 L12 6.5 H21.53Z" fill="#db4437"/><path d="M2.47 6.5 A11 11 0 0 0 12 23 L16.76 14.75 L7.24 14.75Z" fill="#0f9d58"/><path d="M12 23 A11 11 0 0 0 21.53 6.5 L12 6.5 L16.76 14.75Z" fill="#f4c20d"/><circle cx="12" cy="12" r="5.2" fill="#fff"/><circle cx="12" cy="12" r="4.1" fill="#4285f4"/></svg>
<div class="a" style="left:906px;top:678px;width:16px;height:16px;border-radius:8px;background:#1e9a9c;color:#fff;font-size:9px;line-height:16px;text-align:center">B</div>
<div class="a" style="left:637px;top:712px;width:6px;height:3px;border-radius:2px;background:#6e7378"></div>
<div class="a" style="left:725px;top:712px;width:6px;height:3px;border-radius:2px;background:#6e7378"></div>
<div class="a" style="left:769px;top:712px;width:6px;height:3px;border-radius:2px;background:#6e7378"></div>
<div class="a" style="left:901px;top:712px;width:6px;height:3px;border-radius:2px;background:#6e7378"></div>
<svg style="left:1064px;top:692px" width="12" height="8" viewBox="0 0 12 8"><path d="M1 7 L6 2 L11 7" stroke="#222" stroke-width="1.4" fill="none"/></svg>
<svg style="left:1093px;top:689px" width="18" height="13" viewBox="0 0 18 13"><path d="M1 5 Q9 -2 17 5 M3.5 7.5 Q9 2.5 14.5 7.5 M6 10 Q9 7.3 12 10" stroke="#222" stroke-width="1.3" fill="none"/><circle cx="9" cy="12" r="1.1" fill="#222"/></svg>
<svg style="left:1118px;top:689px" width="17" height="14" viewBox="0 0 17 14"><path d="M1 4.5 H4 L8 1 V13 L4 9.5 H1Z" fill="none" stroke="#222" stroke-width="1.2" stroke-linejoin="round"/><path d="M10.5 4.5 Q12 7 10.5 9.5 M12.5 2.5 Q15 7 12.5 11.5 M14.5 1 Q17.5 7 14.5 13" stroke="#222" stroke-width="1.2" fill="none"/></svg>
<svg style="left:1142px;top:691px" width="17" height="10" viewBox="0 0 17 10"><rect x="0.7" y="0.7" width="13.6" height="8.6" rx="1.5" fill="none" stroke="#222" stroke-width="1.3"/><rect x="2.2" y="2.2" width="10.6" height="5.6" fill="#222"/><rect x="14.8" y="3" width="1.8" height="4" fill="#222"/></svg>
<div class="a" style="left:1200px;top:681px;width:37px;text-align:right;font-size:12px;color:#1c1c1c">9:59</div>
<div class="a" style="left:1160px;top:697px;width:77px;text-align:right;font-size:12px;color:#1c1c1c">18/12/2025</div>
<svg style="left:1245px;top:686px" width="16" height="18" viewBox="0 0 16 18"><path d="M2.5 14 L2.5 9 Q2.5 4.5 7 4.5 Q11.5 4.5 11.5 9 L11.5 14 L13 15 H1 Z" fill="none" stroke="#222" stroke-width="1.2" stroke-linejoin="round"/><path d="M5.5 16 Q7 17.8 8.5 16" stroke="#222" stroke-width="1.2" fill="none"/><path d="M5 8.5 H8.5 L5 12 H8.5" stroke="#222" stroke-width="1.1" fill="none"/><path d="M10.5 1 H14 L10.5 4.5 H14" stroke="#222" stroke-width="1.1" fill="none"/></svg>
<div class="a" style="left:771px;top:81px;width:320px;height:507px;background:#fdfbfb;border-radius:9px;box-shadow:0 1.5px 3px rgba(40,30,30,.3),0 0 1px rgba(0,0,0,.25)"></div>
<div class="a" style="left:792px;top:101.5px;font-size:16px;-webkit-text-stroke:0.45px #241c1c;color:#241c1c;white-space:nowrap">Historial de descargas recientes</div>
<svg style="left:1050px;top:96px" width="24" height="24" viewBox="0 0 24 24"><circle cx="12" cy="12" r="10.4" fill="none" stroke="#6a4640" stroke-width="1.5"/><path d="M8 8 L16 16 M16 8 L8 16" stroke="#3a2e2e" stroke-width="1.4"/></svg>
<div class="a" style="left:771px;top:129px;width:320px;height:52px;background:#ebe8ea"></div>
<div class="a" style="left:832px;top:142px;font-size:12.6px;-webkit-text-stroke:0.5px #2a2222;color:#2a2222;white-space:nowrap">BBH_Bartle.zip</div>
<div class="a" style="left:832px;top:160px;font-size:11px;letter-spacing:-0.25px;color:#6a6160;white-space:nowrap">22,1 KB • Hecho</div>
<svg style="left:796px;top:144px" width="19" height="15" viewBox="0 0 19 15"><path d="M0 1 Q0 0 1 0 L7 0 L8.5 2 L18 2 Q19 2 19 3 L19 14 Q19 15 18 15 L1 15 Q0 15 0 14Z" fill="#e9c45a"/><rect x="0" y="6.5" width="19" height="1.6" fill="#b59a4a"/><rect x="0" y="4.5" width="19" height="2" fill="#f5da7e"/><rect x="2" y="8.5" width="1.5" height="4" fill="#8a7a6a"/></svg>
<div class="a" style="left:832px;top:194px;font-size:12.6px;-webkit-text-stroke:0.5px #2a2222;color:#2a2222;white-space:nowrap">ejercicio PR5.jpg</div>
<div class="a" style="left:832px;top:212px;font-size:11px;letter-spacing:-0.25px;color:#6a6160;white-space:nowrap">39,4 KB • Hace 19 horas</div>
<svg style="left:797px;top:194px" width="17" height="19" viewBox="0 0 17 19"><path d="M0.5 0.5 H11.5 L16.5 5.5 V18.5 H0.5Z" fill="#fff" stroke="#9aa0a6" stroke-width="1"/><rect x="3.5" y="7" width="10" height="8.5" fill="#2f7fd0"/><path d="M3.5 15.5 L7 11 L10 13.5 L13.5 10 V15.5Z" fill="#7fc0f0"/></svg>
<div class="a" style="left:832px;top:246px;font-size:12.6px;-webkit-text-stroke:0.5px #2a2222;color:#2a2222;white-space:nowrap">4a_users.xlsx - users4d.csv</div>
<div class="a" style="left:832px;top:264px;font-size:11px;letter-spacing:-0.25px;color:#6a6160;white-space:nowrap">1.001 B • Hace 20 horas</div>
<svg style="left:796px;top:246px" width="18" height="19" viewBox="0 0 18 19"><path d="M4.5 1.5 H13 L17.5 6 V18.5 H4.5Z" fill="#fff" stroke="#b8c4bc" stroke-width="1"/><rect x="0" y="5" width="9" height="10" fill="#1d7a44"/><path d="M2.2 7.2 L6.8 12.8 M6.8 7.2 L2.2 12.8" stroke="#fff" stroke-width="1.3"/><text x="13" y="16" font-size="8.5" fill="#4c9a6a" text-anchor="middle" font-family="Liberation Sans">a</text></svg>
<div class="a" style="left:832px;top:298px;font-size:12.6px;-webkit-text-stroke:0.5px #2a2222;color:#2a2222;white-space:nowrap">users4d_1.xlsx - users4d (1).csv</div>
<div class="a" style="left:832px;top:316px;font-size:11px;letter-spacing:-0.25px;color:#6a6160;white-space:nowrap">538 B • Hace 21 horas</div>
<svg style="left:796px;top:298px" width="18" height="19" viewBox="0 0 18 19"><path d="M4.5 1.5 H13 L17.5 6 V18.5 H4.5Z" fill="#fff" stroke="#b8c4bc" stroke-width="1"/><rect x="0" y="5" width="9" height="10" fill="#1d7a44"/><path d="M2.2 7.2 L6.8 12.8 M6.8 7.2 L2.2 12.8" stroke="#fff" stroke-width="1.3"/><text x="13" y="16" font-size="8.5" fill="#4c9a6a" text-anchor="middle" font-family="Liberation Sans">a</text></svg>
<div class="a" style="left:832px;top:350px;font-size:12.6px;-webkit-text-stroke:0.5px #2a2222;color:#2a2222;white-space:nowrap">users4d_1.xlsx - users4d.csv</div>
<div class="a" style="left:832px;top:368px;font-size:11px;letter-spacing:-0.25px;color:#6a6160;white-space:nowrap">538 B • Hace 21 horas</div>
<svg style="left:796px;top:350px" width="18" height="19" viewBox="0 0 18 19"><path d="M4.5 1.5 H13 L17.5 6 V18.5 H4.5Z" fill="#fff" stroke="#b8c4bc" stroke-width="1"/><rect x="0" y="5" width="9" height="10" fill="#1d7a44"/><path d="M2.2 7.2 L6.8 12.8 M6.8 7.2 L2.2 12.8" stroke="#fff" stroke-width="1.3"/><text x="13" y="16" font-size="8.5" fill="#4c9a6a" text-anchor="middle" font-family="Liberation Sans">a</text></svg>
<div class="a" style="left:832px;top:402px;font-size:12.6px;-webkit-text-stroke:0.5px #2a2222;color:#2a2222;white-space:nowrap">users4d_1.xlsx - users4d.csv</div>
<div class="a" style="left:832px;top:420px;font-size:11px;letter-spacing:-0.25px;color:#6a6160;white-space:nowrap">833 B • Hace 21 horas</div>
<svg style="left:796px;top:402px" width="18" height="19" viewBox="0 0 18 19"><path d="M4.5 1.5 H13 L17.5 6 V18.5 H4.5Z" fill="#fff" stroke="#b8c4bc" stroke-width="1"/><rect x="0" y="5" width="9" height="10" fill="#1d7a44"/><path d="M2.2 7.2 L6.8 12.8 M6.8 7.2 L2.2 12.8" stroke="#fff" stroke-width="1.3"/><text x="13" y="16" font-size="8.5" fill="#4c9a6a" text-anchor="middle" font-family="Liberation Sans">a</text></svg>
<div class="a" style="left:832px;top:454px;font-size:12.6px;-webkit-text-stroke:0.5px #2a2222;color:#2a2222;white-space:nowrap">users4d_1.xlsx - users4a.csv</div>
<div class="a" style="left:832px;top:472px;font-size:11px;letter-spacing:-0.25px;color:#6a6160;white-space:nowrap">833 B • Hace 21 horas</div>
<svg style="left:796px;top:454px" width="18" height="19" viewBox="0 0 18 19"><path d="M4.5 1.5 H13 L17.5 6 V18.5 H4.5Z" fill="#fff" stroke="#b8c4bc" stroke-width="1"/><rect x="0" y="5" width="9" height="10" fill="#1d7a44"/><path d="M2.2 7.2 L6.8 12.8 M6.8 7.2 L2.2 12.8" stroke="#fff" stroke-width="1.3"/><text x="13" y="16" font-size="8.5" fill="#4c9a6a" text-anchor="middle" font-family="Liberation Sans">a</text></svg>
<div class="a" style="left:832px;top:506px;font-size:12.6px;-webkit-text-stroke:0.5px #2a2222;color:#2a2222;white-space:nowrap">Ref_1399&nbsp; Borrador contrato.doc</div>
<div class="a" style="left:832px;top:524px;font-size:11px;letter-spacing:-0.25px;color:#6a6160;white-space:nowrap">130 KB • Hace 21 horas</div>
<svg style="left:795px;top:506px" width="18" height="20" viewBox="0 0 18 20"><path d="M5 0.5 H14 L17.5 4 V17.5 H5Z" fill="#f4f4f4" stroke="#b0b6bc" stroke-width="1"/><path d="M8 6 H15 M8 8.5 H15 M8 11 H15 M8 13.5 H15" stroke="#9aa4ae" stroke-width="1"/><rect x="0" y="6" width="9" height="9" fill="#2b5aa0"/><text x="4.5" y="13.5" font-size="7.5" font-weight="bold" fill="#fff" text-anchor="middle" font-family="Liberation Sans">W</text></svg>
<div class="a" style="left:1008px;top:138px;width:27px;height:27px;border-radius:14px;background:#d8d4d5"></div>
<svg style="left:1013px;top:144px" width="18" height="15" viewBox="0 0 18 15"><path d="M1 2 Q1 1 2 1 L6.5 1 L8.2 2.8 L16 2.8 Q17 2.8 17 3.8 L17 13 Q17 14 16 14 L2 14 Q1 14 1 13Z M1 5 H17" fill="none" stroke="#3d3230" stroke-width="1.4"/></svg>
<svg style="left:1049px;top:143px" width="16" height="16" viewBox="0 0 16 16"><path d="M6.5 1 H1 V15 H15 V9.5" fill="none" stroke="#3d3230" stroke-width="1.5"/><path d="M9 1 H15 V7 M15 1 L7 9" fill="none" stroke="#3d3230" stroke-width="1.5"/></svg>
<svg style="left:1031px;top:148px" width="13" height="20" viewBox="0 0 13 20"><path d="M1 1 L1 16 L4.5 12.8 L7 18.5 L9.3 17.5 L6.9 12 L11.5 12Z" fill="#fff" stroke="#222" stroke-width="1" stroke-linejoin="round"/></svg>
<div class="a" style="left:792px;top:557px;font-size:14px;-webkit-text-stroke:0.45px #2a2222;letter-spacing:-0.4px;color:#2a2222;white-space:nowrap">Historial de descargas completo</div>
<svg style="left:1054px;top:556px" width="15" height="15" viewBox="0 0 16 16"><path d="M6.5 1.2 H2.5 Q1.2 1.2 1.2 2.5 V13.5 Q1.2 14.8 2.5 14.8 H13.5 Q14.8 14.8 14.8 13.5 V9.5" fill="none" stroke="#6a6262" stroke-width="1.5"/><path d="M9.5 1.2 H14.8 V6.5 M14.8 1.2 L7.5 8.5" fill="none" stroke="#6a6262" stroke-width="1.5"/></svg>
</body></html>
